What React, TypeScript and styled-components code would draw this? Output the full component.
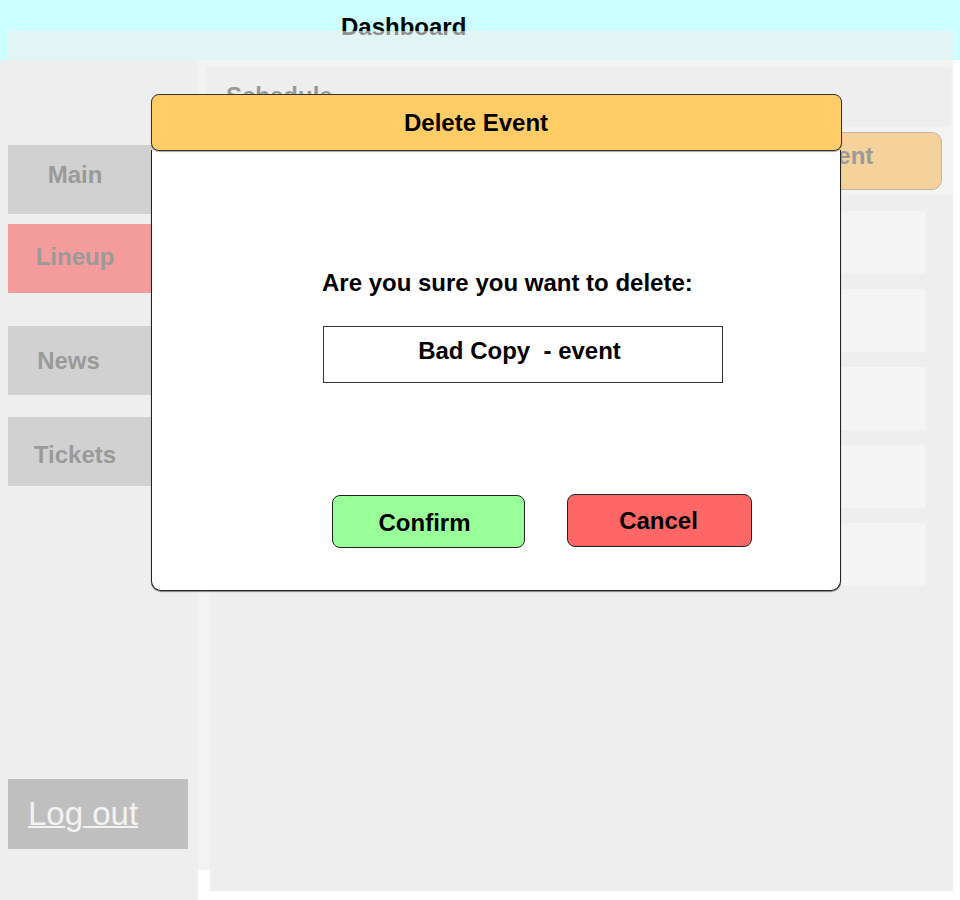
import React from "react";
import styled, { createGlobalStyle } from "styled-components";

const GlobalStyle = createGlobalStyle`
  html, body { margin: 0; padding: 0; background: #ffffff; }
  body { font-family: "Liberation Sans", Arial, sans-serif; }
  * { box-sizing: border-box; }
`;

const Page = styled.div`
  position: relative;
  width: 960px;
  height: 900px;
  overflow: hidden;
  background: #ffffff;
`;

const Header = styled.header`
  height: 60px;
  background: #ccffff;
  display: flex;
  flex-direction: column;
`;

const Title = styled.h1`
  margin: 0;
  padding: 13px 0 0 341px;
  font-size: 24px;
  line-height: 28px;
  font-weight: 700;
  color: #000000;
`;

const Strip = styled.div`
  position: relative;
  height: 29px;
  margin: -10px 7px 0 8px;
  background: rgba(238, 238, 238, 0.6);
`;

const Body = styled.div`
  display: flex;
  height: 840px;
`;

const Sidebar = styled.nav`
  width: 198px;
  flex-shrink: 0;
  background: #eeeeee;
  display: flex;
  flex-direction: column;
  padding: 85px 0 51px 8px;
`;

const NavButton = styled.div<{ $bg?: string; $mt?: number; $pt?: number; $pb?: number }>`
  width: 180px;
  height: 69px;
  flex-shrink: 0;
  margin-top: ${(p) => p.$mt ?? 0}px;
  padding-top: ${(p) => p.$pt ?? 0}px;
  padding-bottom: ${(p) => p.$pb ?? 0}px;
  background: ${(p) => p.$bg ?? "#d1d1d1"};
  display: flex;
  align-items: center;
`;

const NavLabel = styled.span<{ $w?: number }>`
  width: ${(p) => p.$w ?? 134}px;
  text-align: center;
  font-size: 24px;
  line-height: 28px;
  font-weight: 700;
  color: #9a9a9a;
`;

const LogOut = styled.a`
  margin-top: auto;
  width: 180px;
  height: 70px;
  flex-shrink: 0;
  background: #bfbfbf;
  display: flex;
  align-items: center;
  padding-left: 20px;
  font-size: 33px;
  font-weight: 400;
  color: #f2f2f2;
  text-decoration: underline;
  text-decoration-thickness: 2px;
`;

const Column = styled.main`
  width: 755px;
  height: 810px;
  flex-shrink: 0;
  background: #f3f3f3;
  display: flex;
  flex-direction: column;
  padding-top: 7px;
`;

const ScheduleBar = styled.div`
  height: 60px;
  flex-shrink: 0;
  margin: 0 2px 0 8px;
  background: #eeeeee;
  padding: 15px 0 0 20px;
  font-size: 24px;
  line-height: 28px;
  font-weight: 700;
  color: #999999;
`;

const Toolbar = styled.div`
  height: 68px;
  flex-shrink: 0;
  display: flex;
  justify-content: flex-end;
  padding: 5px 11px 0 0;
`;

const AddButton = styled.div`
  width: 256px;
  height: 58px;
  background: #f5d29c;
  border: 1px solid #c2b6a0;
  border-radius: 10px;
  display: flex;
  align-items: center;
  justify-content: center;
  padding-bottom: 10px;
  font-size: 24px;
  font-weight: 700;
  color: #9a9a9a;
`;

const MainPanel = styled.section`
  height: 696px;
  flex-shrink: 0;
  margin-left: 12px;
  background: #eeeeee;
  padding: 16px 27px 0 15px;
  display: flex;
  flex-direction: column;
  gap: 15px;
`;

const EventRow = styled.div`
  height: 63px;
  flex-shrink: 0;
  background: #f4f4f4;
`;

const Modal = styled.div`
  position: absolute;
  top: 94px;
  left: 151px;
  width: 691px;
`;

const ModalHeader = styled.div`
  position: relative;
  z-index: 1;
  height: 57px;
  background: #ffcc66;
  border: 1px solid #333333;
  border-radius: 8px;
  box-shadow: 0 1px 1px rgba(0, 0, 0, 0.35);
  display: flex;
  align-items: center;
  padding-left: 252px;
  font-size: 24px;
  font-weight: 700;
  color: #000000;
`;

const ModalBody = styled.div`
  width: 690px;
  height: 441px;
  margin-top: -1px;
  background: #ffffff;
  border: 1px solid #222222;
  border-top: none;
  border-radius: 0 0 10px 10px;
  box-shadow: 0 1px 1px rgba(0, 0, 0, 0.45);
  padding: 119px 0 0 170px;
  display: flex;
  flex-direction: column;
  align-items: flex-start;
`;

const Prompt = styled.p`
  margin: 0;
  font-size: 24px;
  line-height: 28px;
  font-weight: 700;
  color: #000000;
`;

const NameBox = styled.div`
  width: 400px;
  height: 57px;
  margin: 29px 0 0 1px;
  border: 1px solid #333333;
  padding: 10px 7px 0 0;
  text-align: center;
  white-space: pre;
  font-size: 24px;
  line-height: 28px;
  font-weight: 700;
  color: #000000;
`;

const ButtonRow = styled.div`
  display: flex;
  align-items: flex-start;
  gap: 42px;
  margin: 111px 0 0 10px;
`;

const ActionButton = styled.button<{
  $bg: string;
  $w: number;
  $mt?: number;
  $shift?: number;
  $pt?: number;
}>`
  width: ${(p) => p.$w}px;
  height: 53px;
  margin-top: ${(p) => p.$mt ?? 0}px;
  background: ${(p) => p.$bg};
  border: 1px solid #222222;
  border-radius: 8px;
  display: flex;
  align-items: center;
  justify-content: center;
  padding: ${(p) => p.$pt ?? 0}px ${(p) => p.$shift ?? 0}px 0 0;
  font-family: "Liberation Sans", Arial, sans-serif;
  font-size: 24px;
  font-weight: 700;
  color: #000000;
  cursor: pointer;
`;

export default function App() {
  return (
    <>
      <GlobalStyle />
      <Page>
        <Header>
          <Title>Dashboard</Title>
          <Strip />
        </Header>
        <Body>
          <Sidebar>
            <NavButton $pb={9}>
              <NavLabel>Main</NavLabel>
            </NavButton>
            <NavButton $bg="#f49c9c" $mt={10} $pb={3}>
              <NavLabel>Lineup</NavLabel>
            </NavButton>
            <NavButton $mt={33}>
              <NavLabel $w={121}>News</NavLabel>
            </NavButton>
            <NavButton $mt={22} $pt={7}>
              <NavLabel>Tickets</NavLabel>
            </NavButton>
            <LogOut href="#">Log out</LogOut>
          </Sidebar>
          <Column>
            <ScheduleBar>Schedule</ScheduleBar>
            <Toolbar>
              <AddButton>Add Event</AddButton>
            </Toolbar>
            <MainPanel>
              {[0, 1, 2, 3, 4].map((i) => (
                <EventRow key={i} />
              ))}
            </MainPanel>
          </Column>
        </Body>
        <Modal>
          <ModalHeader>Delete Event</ModalHeader>
          <ModalBody>
            <Prompt>Are you sure you want to delete:</Prompt>
            <NameBox>{"Bad Copy  - event"}</NameBox>
            <ButtonRow>
              <ActionButton $bg="#99ff99" $w={193} $mt={1} $shift={8} $pt={2}>
                Confirm
              </ActionButton>
              <ActionButton $bg="#ff6666" $w={185} $shift={2}>
                Cancel
              </ActionButton>
            </ButtonRow>
          </ModalBody>
        </Modal>
      </Page>
    </>
  );
}
